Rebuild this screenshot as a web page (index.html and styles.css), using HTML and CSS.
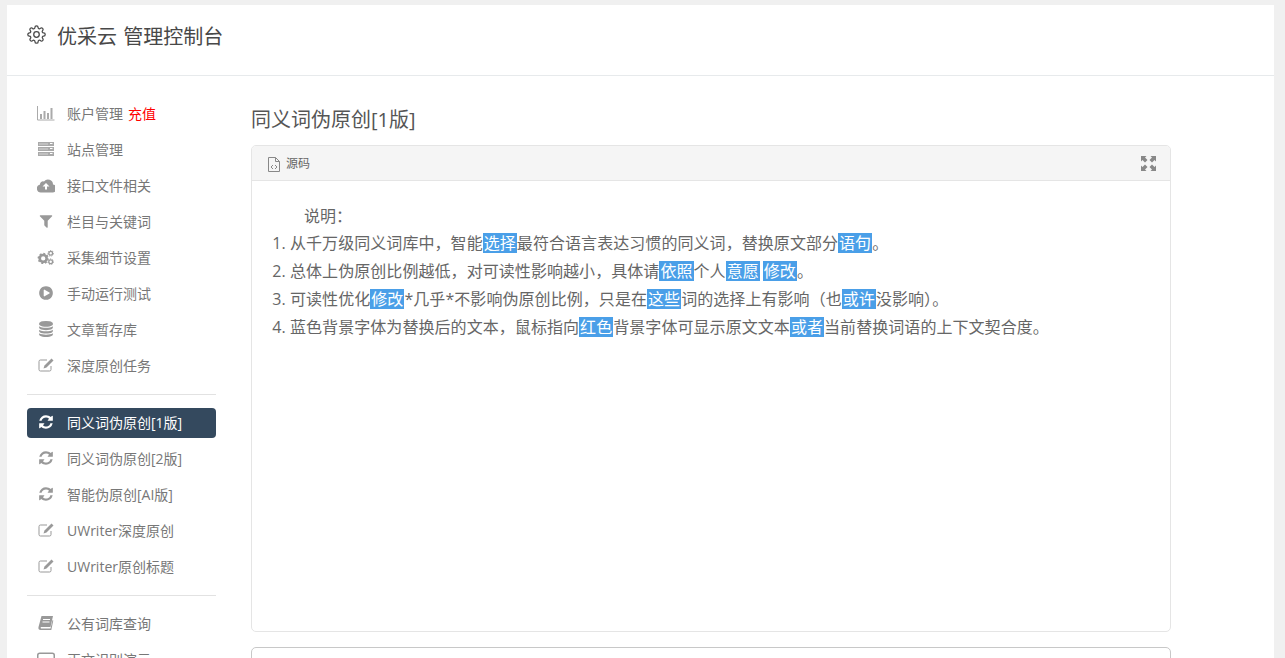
FILE: index.html
```html
<!DOCTYPE html>
<html lang="zh-CN">
<head>
    <meta charset="UTF-8">
    <title>优采云 管理控制台</title>
    <link rel="stylesheet" href="styles.css">
</head>
<body>
    <svg class="sprite" xmlns="http://www.w3.org/2000/svg">
        <symbol id="i-chart" viewBox="0 0 18 16"><path d="M.5 1v14h17" fill="none" stroke="currentColor"/><path d="M3 9h2v5H3zM6.500 6h2v8h-2zM10 8h2v6h-2zM13.500 3h2v11h-2z" fill="currentColor"/></symbol>
        <symbol id="i-server" viewBox="0 0 16 14"><path d="M0 0h16v4H0zM0 5h16v4H0zM0 10h16v4H0z" fill="currentColor"/><path d="M1 2h9M1 7h9M1 12h9" stroke="#fff" stroke-opacity=".5"/><path d="M12 1.500h2.500M12 6.500h2.500M12 11.500h2.500" stroke="#fff"/></symbol>
        <symbol id="i-cloud" viewBox="0 0 18 14"><path d="M4 14a4 4 0 0 1-1-7.900A3 3 0 0 1 7 3a5 5 0 0 1 9 3 4 4 0 0 1-1.500 8zM9 4.500 5.500 8H8v3h2V8h2.500z" fill="currentColor" fill-rule="evenodd"/></symbol>
        <symbol id="i-filter" viewBox="0 0 1792 1792"><path d="M1595 295q17 41-14 70l-493 493v742q0 42-39 59-13 5-25 5-27 0-45-19l-256-256q-19-19-19-45v-486l-493-493q-31-29-14-70 17-39 59-39h1280q42 0 59 39z" fill="currentColor"/></symbol>
        <symbol id="i-cogs" viewBox="0 0 18 16"><circle cx="6" cy="9" r="3.700" fill="none" stroke="currentColor" stroke-width="2.800"/><circle cx="6" cy="9" r="5.200" fill="none" stroke="currentColor" stroke-width="1.600" stroke-dasharray="2 2"/><circle cx="14" cy="3.500" r="2" fill="none" stroke="currentColor" stroke-width="1.400"/><circle cx="14" cy="3.500" r="3" fill="none" stroke="currentColor" stroke-dasharray="1.300 1.300"/><circle cx="14" cy="12.500" r="2" fill="none" stroke="currentColor" stroke-width="1.400"/><circle cx="14" cy="12.500" r="3" fill="none" stroke="currentColor" stroke-dasharray="1.300 1.300"/></symbol>
        <symbol id="i-play" viewBox="0 0 1792 1792"><path d="M896 128q209 0 385.500 103t279.500 279.500 103 385.500-103 385.500-279.500 279.500-385.500 103-385.500-103-279.500-279.500-103-385.500 103-385.500 279.500-279.500 385.500-103zm384 823q32-18 32-55t-32-55l-544-320q-31-19-64-1-32 19-32 56v640q0 37 32 56 16 8 32 8 17 0 32-9z" fill="currentColor"/></symbol>
        <symbol id="i-db" viewBox="0 0 1792 1792"><path d="M896 768q237 0 443-43t325-127v170q0 69-103 128t-280 93.500-385 34.500-385-34.500-280-93.500-103-128v-170q119 84 325 127t443 43zm0 768q237 0 443-43t325-127v170q0 69-103 128t-280 93.500-385 34.500-385-34.500-280-93.500-103-128v-170q119 84 325 127t443 43zm0-384q237 0 443-43t325-127v170q0 69-103 128t-280 93.500-385 34.500-385-34.500-280-93.500-103-128v-170q119 84 325 127t443 43zm0-1152q208 0 385 34.500t280 93.500 103 128v128q0 69-103 128t-280 93.500-385 34.500-385-34.500-280-93.500-103-128v-128q0-69 103-128t280-93.500 385-34.500z" fill="currentColor"/></symbol>
        <symbol id="i-edit" viewBox="0 0 16 14"><path d="M13 8v3.500a1.500 1.500 0 0 1-1.500 1.500h-9A1.500 1.500 0 0 1 1 11.500v-8A1.500 1.500 0 0 1 2.500 2H9" fill="none" stroke="currentColor"/><path d="M13.500.500 15.500 2.500 8.500 9.500 5.500 10.500 6.500 7.500z" fill="currentColor"/></symbol>
        <symbol id="i-refresh" viewBox="0 0 1792 1792"><path d="M1639 1056q0 5-1 7-64 268-268 434.500t-478 166.500q-146 0-282.500-55t-243.500-157l-129 129q-19 19-45 19t-45-19-19-45v-448q0-26 19-45t45-19h448q26 0 45 19t19 45-19 45l-137 137q71 66 161 102t187 36q134 0 250-65t186-179q11-17 53-117 8-23 30-23h192q13 0 22.500 9.500t9.500 22.500zm25-800v448q0 26-19 45t-45 19h-448q-26 0-45-19t-19-45 19-45l138-138q-148-137-349-137-134 0-250 65t-186 179q-11 17-53 117-8 23-30 23h-199q-13 0-22.500-9.500t-9.500-22.500v-7q65-268 270-434.500t480-166.500q146 0 284 55.500t245 156.500l130-129q19-19 45-19t45 19 19 45z" fill="currentColor"/></symbol>
        <symbol id="i-book" viewBox="0 0 16 14"><path d="M3.500 0H15l-2.500 11H3a1 1 0 0 0 0 1.500h9.500l2-8.500.8.500-2 9.500H2.500C1 14 0 13 .5 11zM5 3v1h7V3zM4.500 5.500v1h7v-1z" fill="currentColor" fill-rule="evenodd"/></symbol>
        <symbol id="i-window" viewBox="0 0 18 14"><rect x=".75" y=".75" width="16.500" height="14" rx="2" fill="none" stroke="currentColor" stroke-width="1.500"/></symbol>
        <symbol id="i-gear" viewBox="0 0 24 24"><g fill="none" stroke="currentColor" stroke-width="1.600"><circle cx="12" cy="12" r="3.500"/><path d="M19.400 15a1.650 1.650 0 0 0 .33 1.820l.06.06a2 2 0 0 1 0 2.830 2 2 0 0 1-2.830 0l-.06-.06a1.650 1.650 0 0 0-1.820-.33 1.650 1.650 0 0 0-1 1.510V21a2 2 0 0 1-2 2 2 2 0 0 1-2-2v-.09A1.650 1.650 0 0 0 9 19.400a1.650 1.650 0 0 0-1.820.33l-.06.06a2 2 0 0 1-2.830 0 2 2 0 0 1 0-2.830l.06-.06a1.650 1.650 0 0 0 .33-1.820 1.650 1.650 0 0 0-1.510-1H3a2 2 0 0 1-2-2 2 2 0 0 1 2-2h.09A1.650 1.650 0 0 0 4.600 9a1.650 1.650 0 0 0-.33-1.820l-.06-.06a2 2 0 0 1 0-2.830 2 2 0 0 1 2.830 0l.06.06a1.650 1.650 0 0 0 1.820.33H9a1.650 1.650 0 0 0 1-1.510V3a2 2 0 0 1 2-2 2 2 0 0 1 2 2v.09a1.650 1.650 0 0 0 1 1.510 1.650 1.650 0 0 0 1.820-.33l.06-.06a2 2 0 0 1 2.830 0 2 2 0 0 1 0 2.830l-.06.06a1.650 1.650 0 0 0-.33 1.820V9a1.650 1.650 0 0 0 1.510 1H21a2 2 0 0 1 2 2 2 2 0 0 1-2 2h-.09a1.650 1.650 0 0 0-1.510 1z"/></g></symbol>
        <symbol id="i-code" viewBox="0 0 12 15"><path d="M.5.500h7l4 4v10H.5z" fill="none" stroke="currentColor"/><path d="M7.500.500v4h4" fill="none" stroke="currentColor"/><path d="M5 8 3 10l2 2M7 8l2 2-2 2" fill="none" stroke="currentColor"/></symbol>
        <symbol id="i-expand" viewBox="0 0 15 15"><path d="M0 0h5.500L4 1.500 6.500 4 4 6.500 1.500 4 0 5.500zM15 0v5.500L13.500 4 11 6.500 8.500 4 11 1.500 9.500 0zM0 15V9.500L1.500 11 4 8.500 6.500 11 4 13.500 5.500 15zM15 15H9.500l1.500-1.500L8.500 11 11 8.500l2.500 2.500 1.500-1.500z" fill="currentColor"/></symbol>
    </svg>

    <div class="page">
        <header class="top-bar">
            <svg class="top-icon"><use href="#i-gear"/></svg>
            <span>优采云 管理控制台</span>
        </header>

        <div class="layout">
            <nav class="sidebar">
                <ul class="nav-group">
                    <li class="nav-item"><span class="nav-icon"><svg class="icon-chart"><use href="#i-chart"/></svg></span>账户管理<a class="recharge">充值</a></li>
                    <li class="nav-item"><span class="nav-icon"><svg class="icon-server"><use href="#i-server"/></svg></span>站点管理</li>
                    <li class="nav-item"><span class="nav-icon"><svg class="icon-wide"><use href="#i-cloud"/></svg></span>接口文件相关</li>
                    <li class="nav-item"><span class="nav-icon"><svg><use href="#i-filter"/></svg></span>栏目与关键词</li>
                    <li class="nav-item"><span class="nav-icon"><svg class="icon-wide"><use href="#i-cogs"/></svg></span>采集细节设置</li>
                    <li class="nav-item"><span class="nav-icon"><svg><use href="#i-play"/></svg></span>手动运行测试</li>
                    <li class="nav-item"><span class="nav-icon"><svg><use href="#i-db"/></svg></span>文章暂存库</li>
                    <li class="nav-item"><span class="nav-icon"><svg class="icon-edit"><use href="#i-edit"/></svg></span>深度原创任务</li>
                </ul>
                <ul class="nav-group">
                    <li class="nav-item active"><span class="nav-icon"><svg><use href="#i-refresh"/></svg></span>同义词伪原创[1版]</li>
                    <li class="nav-item"><span class="nav-icon"><svg><use href="#i-refresh"/></svg></span>同义词伪原创[2版]</li>
                    <li class="nav-item"><span class="nav-icon"><svg><use href="#i-refresh"/></svg></span>智能伪原创[AI版]</li>
                    <li class="nav-item"><span class="nav-icon"><svg class="icon-edit"><use href="#i-edit"/></svg></span>UWriter深度原创</li>
                    <li class="nav-item"><span class="nav-icon"><svg class="icon-edit"><use href="#i-edit"/></svg></span>UWriter原创标题</li>
                </ul>
                <ul class="nav-group">
                    <li class="nav-item"><span class="nav-icon"><svg class="icon-edit"><use href="#i-book"/></svg></span>公有词库查询</li>
                    <li class="nav-item"><span class="nav-icon"><svg class="icon-wide"><use href="#i-window"/></svg></span>正文识别演示</li>
                </ul>
            </nav>

            <main class="content">
                <h2 class="page-title">同义词伪原创[1版]</h2>

                <section class="editor">
                    <div class="editor-head">
                        <span class="editor-tab"><svg class="code-icon"><use href="#i-code"/></svg>源码</span>
                        <svg class="expand-icon"><use href="#i-expand"/></svg>
                    </div>
                    <div class="editor-body">
                        <p class="note-title">说明：</p>
                        <ol class="notes">
                            <li>从千万级同义词库中，智能<mark>选择</mark>最符合语言表达习惯的同义词，替换原文部分<mark>语句</mark>。</li>
                            <li>总体上伪原创比例越低，对可读性影响越小，具体请<mark>依照</mark>个人<mark>意愿</mark><mark class="adjacent">修改</mark>。</li>
                            <li>可读性优化<mark>修改</mark>*几乎*不影响伪原创比例，只是在<mark>这些</mark>词的选择上有影响（也<mark>或许</mark>没影响）。</li>
                            <li>蓝色背景字体为替换后的文本，鼠标指向<mark>红色</mark>背景字体可显示原文文本<mark>或者</mark>当前替换词语的上下文契合度。</li>
                        </ol>
                    </div>
                </section>

                <section class="editor second"></section>
            </main>
        </div>
    </div>
</body>
</html>
```

FILE: styles.css
```css
html, body {
    height: 100%;
    overflow: hidden;
}

body {
    margin: 0;
    padding: 5px 11px 0 7px;
    box-sizing: border-box;
    background-color: #f0f0f0;
    font-family: "Open Sans", "Noto Sans CJK SC", sans-serif;
    color: #676a6c;
}

.sprite {
    display: none;
}

.page {
    background-color: #fff;
    min-height: 900px;
}

.top-bar {
    display: flex;
    align-items: center;
    height: 71px;
    padding: 0 0 10px 20px;
    box-sizing: border-box;
    border-bottom: 1px solid #e7eaec;
    font-size: 20px;
    word-spacing: 1px;
    color: #484848;
}

.top-icon {
    width: 19px;
    height: 19px;
    margin-right: 11px;
    margin-top: -2px;
}

.layout {
    display: flex;
    padding: 23px 0 0 20px;
}

.sidebar {
    width: 189px;
    flex-shrink: 0;
    font-size: 14px;
}

.nav-group {
    list-style: none;
    margin: 0 0 13px;
    padding: 0 0 7px;
    border-bottom: 1px solid #e2e2e2;
}

.nav-group:last-child {
    border-bottom: none;
}

.nav-item {
    display: flex;
    align-items: center;
    height: 30px;
    margin-bottom: 6px;
    padding-bottom: 2px;
    box-sizing: border-box;
    border-radius: 4px;
    color: #777;
    white-space: nowrap;
}

.nav-group .nav-item:last-child {
    margin-bottom: 0;
}

.nav-group:nth-child(-n+2) .nav-item:last-child {
    margin-bottom: 6px;
}

.nav-icon {
    display: flex;
    align-items: center;
    justify-content: center;
    width: 18px;
    margin: 0 12px 0 10px;
    color: #999;
}

.nav-icon svg {
    width: 16px;
    height: 16px;
}

.nav-icon .icon-chart {
    width: 18px;
    height: 16px;
    color: #aaa;
}

.nav-icon .icon-server {
    width: 16px;
    height: 14px;
    color: #aaa;
}

.nav-icon .icon-edit {
    width: 16px;
    height: 14px;
}

.nav-icon .icon-wide {
    width: 18px;
    height: 15px;
}

.nav-item.active {
    background-color: #34495e;
    color: #fff;
}

.nav-item.active .nav-icon {
    color: #fff;
}

.recharge {
    margin-left: 5px;
    color: #f00;
}

.content {
    width: 920px;
    margin-left: 35px;
}

.page-title {
    margin: 6px 0 10px;
    font-size: 20px;
    font-weight: 400;
    line-height: 30px;
    color: #555;
}

.editor {
    height: 487px;
    border: 1px solid #e5e5e5;
    border-radius: 5px;
    box-sizing: border-box;
    overflow: hidden;
}

.editor.second {
    margin-top: 15px;
    height: 200px;
    border-color: #c8c8c8;
}

.editor-head {
    display: flex;
    align-items: center;
    justify-content: space-between;
    height: 35px;
    padding: 0 14px 0 16px;
    box-sizing: border-box;
    background-color: #f5f5f5;
    border-bottom: 1px solid #e5e5e5;
}

.editor-tab {
    display: flex;
    align-items: center;
    font-size: 12px;
    color: #666;
}

.code-icon {
    width: 12px;
    height: 15px;
    margin-right: 6px;
    margin-top: 2px;
    color: #888;
}

.expand-icon {
    width: 15px;
    height: 15px;
    color: #888;
}

.editor-body {
    padding: 21px 20px;
    font-size: 16px;
    line-height: 28px;
    letter-spacing: .06px;
    color: #666;
}

.note-title {
    margin: 0 0 -1px;
    padding-left: 32px;
}

.notes {
    margin: 0;
    padding-left: 18px;
}

.notes mark {
    display: inline-block;
    padding: 0 1px;
    line-height: 20px;
    background-color: #4a9fe8;
    color: #fff;
}

.notes mark.adjacent {
    margin-left: 3px;
}
```
